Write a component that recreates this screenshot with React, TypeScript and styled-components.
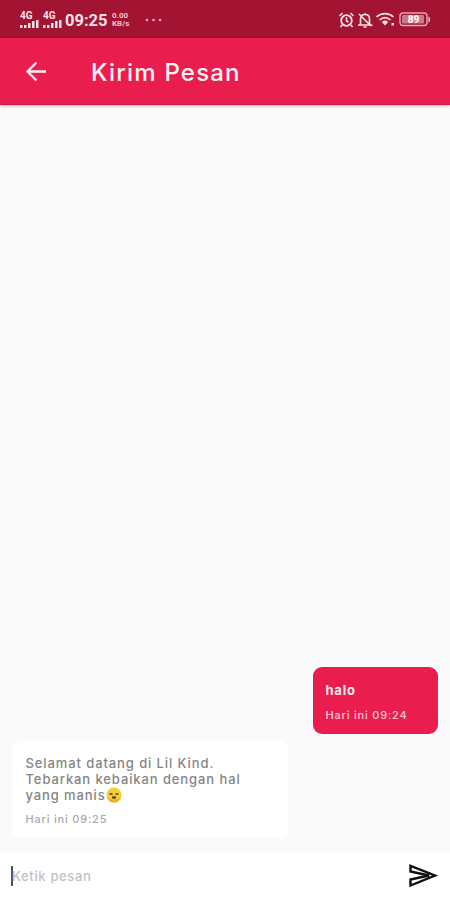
import React from "react";
import styled, { createGlobalStyle } from "styled-components";

const GlobalStyle = createGlobalStyle`
  *, *::before, *::after { box-sizing: border-box; }
  body { margin: 0; background: #fafafa; }
`;

const Screen = styled.main`
  width: 450px;
  height: 900px;
  display: flex;
  flex-direction: column;
  overflow: hidden;
  background: #fafafa;
  font-family: Inter, "Noto Sans", sans-serif;
`;

const StatusBar = styled.header`
  flex: none;
  height: 38px;
  padding: 1px 19px 0 20px;
  display: flex;
  align-items: center;
  background: #a31332;
  color: #f9e3e8;
`;

const Signal = styled.div`
  width: 19px;
  margin-right: 4px;
  display: flex;
  flex-direction: column;
`;

const Network = styled.span`
  font: 700 10px/8px Roboto, sans-serif;
`;

const Bars = styled.svg`
  display: block;
  width: 19px;
  height: 8px;
`;

const Clock = styled.time`
  width: 43px;
  margin: 2px 4px 0 -1px;
  font: 700 16.5px/20px Roboto, sans-serif;
  white-space: nowrap;
`;

const Speed = styled.div`
  display: flex;
  flex-direction: column;
  width: 20px;
  font: 700 8px/8px Roboto, sans-serif;
  color: #edc5ce;
`;

const More = styled.svg`
  width: 18px;
  height: 4px;
  margin-left: 13px;
`;

const StatusIcons = styled.div`
  margin-left: auto;
  display: flex;
  align-items: center;
  gap: 3px;
`;

const AppBar = styled.header`
  flex: none;
  height: 67px;
  padding: 0 24px;
  display: flex;
  align-items: center;
  background: #e91e4e;
  border-bottom: 1px solid #d21b48;
  box-shadow: 0 1px 3px rgba(0, 0, 0, 0.25);
  color: #fff2f4;
  z-index: 1;
`;

const BackButton = styled.button`
  width: 24px;
  height: 24px;
  padding: 0;
  border: 0;
  background: none;
  color: inherit;
`;

const Title = styled.h1`
  margin: 3px 0 0 43px;
  font-size: 24px;
  line-height: 30px;
  font-weight: 500;
  letter-spacing: 1.2px;
  white-space: nowrap;
`;

const Thread = styled.section`
  flex: 1;
  display: flex;
  flex-direction: column;
  justify-content: flex-end;
  gap: 6px;
  padding: 0 12px 13px;
`;

const Bubble = styled.article<{ $sent?: boolean }>`
  display: flex;
  flex-direction: column;
  align-self: ${({ $sent }) => ($sent ? "flex-end" : "flex-start")};
  width: ${({ $sent }) => ($sent ? 125 : 276)}px;
  height: ${({ $sent }) => ($sent ? 67 : 99)}px;
  padding: ${({ $sent }) => ($sent ? "15px 12.5px" : "15px 13.5px")};
  gap: ${({ $sent }) => ($sent ? 9 : 8)}px;
  border-radius: 9px;
  background: ${({ $sent }) => ($sent ? "#e91e4e" : "#fff")};
  color: ${({ $sent }) => ($sent ? "#ffe9ed" : "#858585")};
`;

const Message = styled.div<{ $strong?: boolean }>`
  font-size: 13px;
  line-height: 16px;
  font-weight: ${({ $strong }) => ($strong ? 700 : 500)};
  letter-spacing: ${({ $strong }) => ($strong ? 0.75 : 0.9)}px;
`;

const Line = styled.span`
  display: flex;
  align-items: center;
  height: 16px;
  white-space: nowrap;
`;

const Stamp = styled.time<{ $sent?: boolean }>`
  font-size: 11px;
  line-height: 16px;
  font-weight: 500;
  letter-spacing: 0.8px;
  white-space: nowrap;
  color: ${({ $sent }) => ($sent ? "#ffc7d2" : "#aaa")};
`;

const Composer = styled.footer`
  flex: none;
  height: 48px;
  padding: 0 11px;
  display: flex;
  align-items: center;
  justify-content: space-between;
  background: #fff;
`;

const Field = styled.div`
  display: flex;
  align-items: center;
  font-size: 13px;
  line-height: 18px;
  font-weight: 500;
  letter-spacing: 0.65px;
  color: #c2c2c2;
`;

const Caret = styled.span`
  width: 2px;
  height: 20px;
  margin-right: -1px;
  background: #555;
`;

const SendButton = styled.button`
  width: 31px;
  height: 26px;
  padding: 0;
  border: 0;
  background: none;
`;

const Icon = styled.svg`
  display: block;
  flex: none;
`;

const CellSignal = () => (
  <Signal>
    <Network>4G</Network>
    <Bars viewBox="0 0 19 8" fill="currentColor">
      <path d="M0 5h2.500v3H0zM4 5h2.500v3H4zM8 3h2.500v5H8zM12 1h2.500v7H12zM16 0h2.500v8H16z" />
    </Bars>
  </Signal>
);

export default function App() {
  return (
    <Screen>
      <GlobalStyle />
      <StatusBar>
        <CellSignal />
        <CellSignal />
        <Clock>09:25</Clock>
        <Speed><span>0.00</span><span>KB/s</span></Speed>
        <More viewBox="0 0 18 4" fill="#e2a9b6">
          <circle cx="2" cy="2" r="1.300" /><circle cx="8.5" cy="2" r="1.300" /><circle cx="15" cy="2" r="1.300" />
        </More>
        <StatusIcons>
          <Icon width="16" height="16" viewBox="0 0 16 16" fill="none" stroke="currentColor" strokeWidth="1.8">
            <circle cx="7.5" cy="8.5" r="5.3" /><path d="M.5 4 3.500 1M11.500 1l3 3M7.500 5v4l2 1M3 13l-1.500 2M12 13l1.500 2" strokeWidth="1.500" />
          </Icon>
          <Icon width="15" height="16" viewBox="0 0 15 16" fill="none" stroke="currentColor" strokeWidth="1.6">
            <path d="M2.500 12V7c0-3 1.500-4.500 4.500-4.500s4.500 1.500 4.500 4.500v5l1.500 1H1zM5.500 15h3M7 1v2M1 2l12 12" />
          </Icon>
          <Icon width="20" height="15" viewBox="0 0 20 15" fill="none" stroke="currentColor" strokeWidth="1.6">
            <path d="M.5 5c5-4.500 12-4.500 17 0M3.500 8c3.500-3 7.500-3 11 0M6.500 10.500c2-1.500 3.500-1.500 5 0" />
            <path d="M6 10l3 3.500 3-3.500zM15.500 11h2.500v2.500h-2.500z" fill="currentColor" stroke="none" />
          </Icon>
          <Icon width="32" height="15" viewBox="0 0 32 15">
            <rect x="1" y="1" width="27" height="12.500" rx="3" fill="#a31332" stroke="#dba6b3" strokeWidth="1.400" />
            <rect x="3" y="3" width="22" height="8.500" rx="1" fill="#cd788b" />
            <path d="M29.500 4.500c2 0 2 6 0 6z" fill="#f3d5dc" />
            <text x="14.500" y="11" textAnchor="middle" fontFamily="Roboto, sans-serif" fontSize="10" fontWeight="800" fill="#fff">89</text>
          </Icon>
        </StatusIcons>
      </StatusBar>
      <AppBar>
        <BackButton aria-label="Kembali">
          <Icon width="24" height="24" viewBox="0 0 24 24" fill="none" stroke="currentColor" strokeWidth="2.3">
            <path d="M22 12.500H3.500M12.500 3.500l-9 9 9 9" />
          </Icon>
        </BackButton>
        <Title>Kirim Pesan</Title>
      </AppBar>
      <Thread>
        <Bubble $sent>
          <Message $strong>halo</Message>
          <Stamp $sent>Hari ini 09:24</Stamp>
        </Bubble>
        <Bubble>
          <Message>
            <Line>Selamat datang di Lil Kind.</Line>
            <Line>Tebarkan kebaikan dengan hal</Line>
            <Line>
              yang manis
              <Icon width="16" height="16" viewBox="0 0 16 16" role="img">
                <circle cx="8" cy="8" r="7.500" fill="#f9cf2d" />
                <path d="M1 10a7.200 7.200 0 0 0 14 0c-3 3-10 4-14 0" fill="#efb022" />
                <path d="M3.500 7h3M9.500 7h3" fill="none" stroke="#493915" strokeWidth="1.500" />
                <ellipse cx="8" cy="10.500" rx="2.200" ry="1.200" fill="#493915" />
              </Icon>
            </Line>
          </Message>
          <Stamp>Hari ini 09:25</Stamp>
        </Bubble>
      </Thread>
      <Composer>
        <Field><Caret />Ketik pesan</Field>
        <SendButton aria-label="Kirim">
          <Icon width="31" height="26" viewBox="0 0 31 26" fill="none" stroke="#111" strokeWidth="2.4">
            <path d="M2.500 2.800 27 12.500 2.500 22.500v-6L21 12.500 2.500 8.500z" />
          </Icon>
        </SendButton>
      </Composer>
    </Screen>
  );
}
